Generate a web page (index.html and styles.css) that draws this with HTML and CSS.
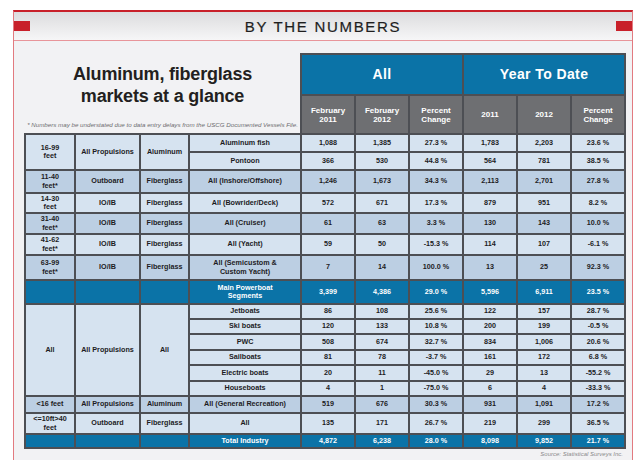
FILE: index.html
```html
<!DOCTYPE html>
<html lang="en">
<head>
    <meta charset="UTF-8">
    <meta name="viewport" content="width=device-width, initial-scale=1.0">
    <title>By The Numbers - Aluminum, fiberglass markets</title>
    <link rel="stylesheet" href="styles.css">
</head>
<body>
    <div class="frame">
        <div class="banner">
            <span class="tab"></span>
            <h2 class="banner-title">BY THE NUMBERS</h2>
            <span class="tab"></span>
        </div>

        <div class="panel">
            <table class="market-table">
                <colgroup>
                    <col class="c-size">
                    <col class="c-prop">
                    <col class="c-mat">
                    <col class="c-seg">
                    <col class="c-num"><col class="c-num"><col class="c-num">
                    <col class="c-num"><col class="c-num"><col class="c-num">
                </colgroup>
                <thead>
                    <tr class="row-group">
                        <td class="intro" colspan="4" rowspan="2">
                            <h1 class="title">Aluminum, fiberglass<br>markets at a glance</h1>
                            <p class="note">* Numbers may be understated due to data entry delays from the USCG Documented Vessels File.</p>
                        </td>
                        <th class="group" colspan="3">All</th>
                        <th class="group" colspan="3">Year To Date</th>
                    </tr>
                    <tr class="row-sub">
                        <th class="sub">February<br>2011</th>
                        <th class="sub">February<br>2012</th>
                        <th class="sub">Percent<br>Change</th>
                        <th class="sub">2011</th>
                        <th class="sub">2012</th>
                        <th class="sub">Percent<br>Change</th>
                    </tr>
                </thead>
                <tbody>
                    <tr class="light h18">
                        <td rowspan="2">16-99<br>feet</td>
                        <td rowspan="2">All Propulsions</td>
                        <td rowspan="2">Aluminum</td>
                        <td>Aluminum fish</td>
                        <td>1,088</td><td>1,385</td><td>27.3 %</td>
                        <td>1,783</td><td>2,203</td><td>23.6 %</td>
                    </tr>
                    <tr class="light h18">
                        <td>Pontoon</td>
                        <td>366</td><td>530</td><td>44.8 %</td>
                        <td>564</td><td>781</td><td>38.5 %</td>
                    </tr>
                    <tr class="dark h23">
                        <td>11-40<br>feet*</td><td>Outboard</td><td>Fiberglass</td>
                        <td>All (Inshore/Offshore)</td>
                        <td>1,246</td><td>1,673</td><td>34.3 %</td>
                        <td>2,113</td><td>2,701</td><td>27.8 %</td>
                    </tr>
                    <tr class="light h20">
                        <td>14-30<br>feet</td><td>IO/IB</td><td>Fiberglass</td>
                        <td>All (Bowrider/Deck)</td>
                        <td>572</td><td>671</td><td>17.3 %</td>
                        <td>879</td><td>951</td><td>8.2 %</td>
                    </tr>
                    <tr class="dark h21">
                        <td>31-40<br>feet*</td><td>IO/IB</td><td>Fiberglass</td>
                        <td>All (Cruiser)</td>
                        <td>61</td><td>63</td><td>3.3 %</td>
                        <td>130</td><td>143</td><td>10.0 %</td>
                    </tr>
                    <tr class="light h21">
                        <td>41-62<br>feet*</td><td>IO/IB</td><td>Fiberglass</td>
                        <td>All (Yacht)</td>
                        <td>59</td><td>50</td><td>-15.3 %</td>
                        <td>114</td><td>107</td><td>-6.1 %</td>
                    </tr>
                    <tr class="dark h25">
                        <td>63-99<br>feet*</td><td>IO/IB</td><td>Fiberglass</td>
                        <td>All (Semicustom &amp;<br>Custom Yacht)</td>
                        <td>7</td><td>14</td><td>100.0 %</td>
                        <td>13</td><td>25</td><td>92.3 %</td>
                    </tr>
                    <tr class="total h24">
                        <td></td><td></td><td></td>
                        <td>Main Powerboat<br>Segments</td>
                        <td>3,399</td><td>4,386</td><td>29.0 %</td>
                        <td>5,596</td><td>6,911</td><td>23.5 %</td>
                    </tr>
                    <tr class="light h15">
                        <td rowspan="6">All</td>
                        <td rowspan="6">All Propulsions</td>
                        <td rowspan="6">All</td>
                        <td>Jetboats</td>
                        <td>86</td><td>108</td><td>25.6 %</td>
                        <td>122</td><td>157</td><td>28.7 %</td>
                    </tr>
                    <tr class="light h15">
                        <td>Ski boats</td>
                        <td>120</td><td>133</td><td>10.8 %</td>
                        <td>200</td><td>199</td><td>-0.5 %</td>
                    </tr>
                    <tr class="light h16">
                        <td>PWC</td>
                        <td>508</td><td>674</td><td>32.7 %</td>
                        <td>834</td><td>1,006</td><td>20.6 %</td>
                    </tr>
                    <tr class="light h15">
                        <td>Sailboats</td>
                        <td>81</td><td>78</td><td>-3.7 %</td>
                        <td>161</td><td>172</td><td>6.8 %</td>
                    </tr>
                    <tr class="light h16">
                        <td>Electric boats</td>
                        <td>20</td><td>11</td><td>-45.0 %</td>
                        <td>29</td><td>13</td><td>-55.2 %</td>
                    </tr>
                    <tr class="light h15">
                        <td>Houseboats</td>
                        <td>4</td><td>1</td><td>-75.0 %</td>
                        <td>6</td><td>4</td><td>-33.3 %</td>
                    </tr>
                    <tr class="dark h17">
                        <td>&lt;16 feet</td><td>All Propulsions</td><td>Aluminum</td>
                        <td>All (General Recreation)</td>
                        <td>519</td><td>676</td><td>30.3 %</td>
                        <td>931</td><td>1,091</td><td>17.2 %</td>
                    </tr>
                    <tr class="light h21">
                        <td>&lt;=10ft&gt;40<br>feet</td><td>Outboard</td><td>Fiberglass</td>
                        <td>All</td>
                        <td>135</td><td>171</td><td>26.7 %</td>
                        <td>219</td><td>299</td><td>36.5 %</td>
                    </tr>
                    <tr class="total h14">
                        <td></td><td></td><td></td>
                        <td>Total Industry</td>
                        <td>4,872</td><td>6,238</td><td>28.0 %</td>
                        <td>8,098</td><td>9,852</td><td>21.7 %</td>
                    </tr>
                </tbody>
            </table>
            <p class="source">Source: Statistical Surveys Inc.</p>
        </div>
    </div>
</body>
</html>
```

FILE: styles.css
```css
* {
    margin: 0;
    padding: 0;
    box-sizing: border-box;
}

body {
    font-family: "Liberation Sans", Arial, sans-serif;
    background: #ffffff;
    color: #231f20;
    padding: 10px 0 0 13px;
    width: 640px;
    height: 460px;
    overflow: hidden;
}

.frame {
    width: 620px;
    height: 470px;
    border-top: 2px solid #c8202a;
    border-left: 1px solid #e27a80;
    border-right: 1px solid #e27a80;
    background: #f2f2f4;
}

.banner {
    display: flex;
    align-items: center;
    justify-content: space-between;
    height: 29px;
    border-bottom: 1px solid #e8959a;
    background: linear-gradient(#dcdcde, #f6f6f7);
}

.tab {
    width: 16px;
    height: 10px;
    background: #c8202a;
}

.banner-title {
    font-size: 15px;
    font-weight: normal;
    letter-spacing: 1.7px;
    color: #1e1e1e;
    -webkit-text-stroke: 0.2px #1e1e1e;
}

.panel {
    padding: 12px 8px 0 10px;
}

.market-table {
    width: 599px;
    table-layout: fixed;
    border-collapse: collapse;
}

.c-size { width: 50px; }
.c-prop { width: 65px; }
.c-mat  { width: 49px; }
.c-seg  { width: 112px; }
.c-num  { width: 54px; }

.market-table th,
.market-table td {
    border: 2px solid #4d4f54;
    padding: 0 2px;
    text-align: center;
    vertical-align: middle;
    font-size: 7.2px;
    line-height: 8.5px;
    font-weight: bold;
    color: #1c1c1e;
}

.market-table .intro {
    border: none;
    vertical-align: top;
    padding: 9px 0 0;
}

.title {
    font-size: 18px;
    line-height: 22px;
    letter-spacing: -0.2px;
    font-weight: bold;
    color: #231f20;
}

.note {
    margin-top: 14px;
    font-size: 6.2px;
    line-height: 8px;
    font-style: italic;
    font-weight: normal;
    color: #6d6d70;
}

.row-group { height: 41px; }
.row-sub { height: 39px; }

.market-table .group {
    background: #0b73a7;
    color: #ffffff;
    font-size: 14px;
    letter-spacing: 0.4px;
}

.market-table .sub {
    background: #6e6f72;
    color: #ffffff;
    font-size: 8px;
    line-height: 9px;
}

.light td { background: #d6e3f0; }
.dark td { background: #bccfe3; }
.market-table .total td {
    background: #0b73a7;
    color: #ffffff;
}

.h14 { height: 14px; }
.h15 { height: 15px; }
.h16 { height: 16px; }
.h17 { height: 17px; }
.h18 { height: 18px; }
.h20 { height: 20px; }
.h21 { height: 21px; }
.h23 { height: 23px; }
.h24 { height: 24px; }
.h25 { height: 25px; }

.source {
    width: 599px;
    margin-top: 1px;
    text-align: right;
    font-size: 6px;
    line-height: 8px;
    font-style: italic;
    color: #8a8a8c;
}
```
